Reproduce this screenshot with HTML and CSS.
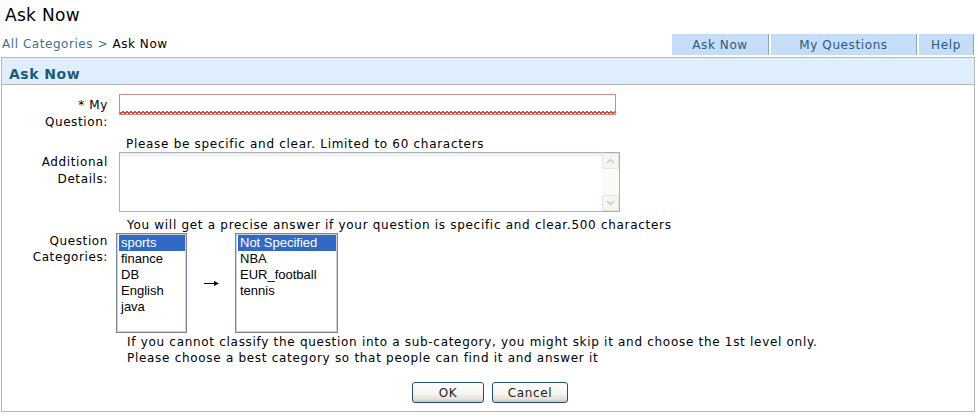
FILE: index.html
```html
<!DOCTYPE html>
<html>
<head>
<meta charset="utf-8">
<title>Ask Now</title>
<link rel="stylesheet" href="styles.css">
</head>
<body>
<h1 class="title">Ask Now</h1>
<div class="topbar">
  <div class="crumbs"><span class="crumb-link">All Categories</span> <span class="crumb-sep">&gt;</span> Ask Now</div>
  <nav class="tabs">
    <span class="tab tab-ask">Ask Now</span>
    <span class="tab tab-mine">My Questions</span>
    <span class="tab tab-help">Help</span>
  </nav>
</div>
<section class="panel">
  <div class="panel-head">Ask Now</div>
  <form class="form">
    <label class="label label-q">* My<br>Question:</label>
    <div class="field"><input class="input" type="text"></div>
    <div class="hint hint-1">Please be specific and clear. Limited to 60 characters</div>

    <label class="label label-d">Additional<br>Details:</label>
    <div class="field">
      <div class="tarea">
        <textarea class="tarea-text"></textarea>
        <div class="scroll">
          <span class="sbtn"><svg width="9" height="6" viewBox="0 0 9 6"><path d="M1 5 L4.5 1.5 L8 5" fill="none" stroke="#c3cad8" stroke-width="1.5"/></svg></span>
          <span class="sbtn"><svg width="9" height="6" viewBox="0 0 9 6"><path d="M1 1 L4.5 4.5 L8 1" fill="none" stroke="#c3cad8" stroke-width="1.5"/></svg></span>
        </div>
      </div>
    </div>
    <div class="hint hint-2">You will get a precise answer if your question is specific and clear.500 characters</div>

    <label class="label label-c">Question<br>Categories:</label>
    <div class="field cats">
      <div class="listbox list-main">
        <div class="opt opt-sel">sports</div>
        <div class="opt">finance</div>
        <div class="opt">DB</div>
        <div class="opt">English</div>
        <div class="opt">java</div>
      </div>
      <div class="arrow"><svg width="16" height="7" viewBox="0 0 16 7"><path d="M0 3.5 H12" stroke="#000" stroke-width="1"/><path d="M10 1 L15 3.5 L10 6 Z" fill="#000"/></svg></div>
      <div class="listbox list-sub">
        <div class="opt opt-sel">Not Specified</div>
        <div class="opt">NBA</div>
        <div class="opt">EUR_football</div>
        <div class="opt">tennis</div>
      </div>
    </div>
    <div class="hint hint-3">If you cannot classify the question into a sub-category, you might skip it and choose the 1st level only.<br>Please choose a best category so that people can find it and answer it</div>

    <div class="actions">
      <button type="button" class="btn btn-ok">OK</button>
      <button type="button" class="btn btn-cancel">Cancel</button>
    </div>
  </form>
</section>
</body>
</html>
```

FILE: styles.css
```css
body {
  margin: 0;
  font-family: "DejaVu Sans", Verdana, sans-serif;
  font-size: 12px;
  letter-spacing: 0.7px;
  color: #000;
  background: #fff;
}

.title {
  margin: 0 0 7px;
  padding: 3px 0 0 5px;
  font-size: 17px;
  font-weight: normal;
  line-height: 24px;
  letter-spacing: 0.3px;
}

.topbar {
  display: flex;
  justify-content: space-between;
  align-items: center;
  height: 21px;
  margin-right: 4px;
}

.crumbs {
  padding-left: 2px;
  line-height: 21px;
  letter-spacing: 0.55px;
}

.crumb-link,
.crumb-sep {
  color: #3f6f8f;
}

.tabs {
  display: flex;
  gap: 2px;
  height: 21px;
}

.tab {
  box-sizing: border-box;
  height: 21px;
  padding-top: 2px;
  line-height: 19px;
  text-align: center;
  letter-spacing: 0.6px;
  background: #c6ddf7;
  border-right: 1px solid #8ea4bb;
  color: #2a5a7e;
}

.tab-ask { width: 97px; }
.tab-mine { width: 146px; }
.tab-help { width: 55px; }

.panel {
  margin: 2px 3px 0 1px;
  border: 1px solid #b7b7b7;
}

.panel-head {
  padding: 7px 0 0 7px;
  line-height: 19px;
  background: #dfeefc;
  border-bottom: 1px solid #b7b7b7;
  font-size: 14px;
  font-weight: bold;
  letter-spacing: 0.5px;
  color: #1d5a7b;
}

.form {
  display: grid;
  grid-template-columns: 106px 1fr;
  column-gap: 11px;
  padding: 9px 0 8px;
}

.label {
  grid-column: 1;
  text-align: right;
  line-height: 17px;
  letter-spacing: 0.6px;
}

.label-q { padding-top: 3px; }
.label-d { padding-top: 2px; }
.label-c { line-height: 16px; }

.field { grid-column: 2; }

.input {
  display: block;
  box-sizing: border-box;
  width: 497px;
  height: 21px;
  margin: 0;
  border: 1px solid #c98b80;
  background-color: #fff;
  background-image:
    linear-gradient(135deg, transparent 30%, #d84a4a 30%, #d84a4a 62%, transparent 62%),
    linear-gradient(45deg, transparent 30%, #d84a4a 30%, #d84a4a 62%, transparent 62%);
  background-size: 4px 3px, 4px 3px;
  background-position: 0 100%, 2px 100%;
  background-repeat: repeat-x;
  background-origin: padding-box;
}

.hint {
  grid-column: 2;
  padding-left: 7px;
  line-height: 16px;
}

.hint-1 { margin-top: 5px; }
.hint-2 { margin-top: 5px; padding-left: 8px; }
.hint-3 { margin-top: 1px; padding-left: 8px; }

.tarea {
  display: flex;
  box-sizing: border-box;
  width: 501px;
  height: 60px;
  border: 1px solid #abb0b8;
  background: linear-gradient(#e9e9e9, #fff 5px);
}

.tarea-text {
  flex: 1;
  margin: 0;
  border: 0;
  padding: 2px;
  resize: none;
  background: transparent;
  outline: none;
}

.scroll {
  display: flex;
  flex-direction: column;
  justify-content: space-between;
  width: 17px;
  background: #fbfbf6;
}

.sbtn {
  display: flex;
  align-items: center;
  justify-content: center;
  box-sizing: border-box;
  height: 16px;
  border: 1px solid #e4e4dc;
  border-radius: 2px;
  background: #f6f6ef;
}

.cats {
  display: flex;
  align-items: center;
  margin-left: -3px;
}

.listbox {
  box-sizing: border-box;
  height: 100px;
  padding: 1px 1px 1px 2px;
  border: 1px solid #7c8894;
  box-shadow: inset 0 0 0 1px #cdd1d6;
  font-family: "Liberation Sans", Arial, sans-serif;
  font-size: 13px;
  letter-spacing: 0;
}

.list-main { width: 71px; }
.list-sub { width: 103px; }

.opt {
  padding-left: 2px;
  line-height: 16px;
  white-space: nowrap;
}

.opt-sel {
  background: #316ac5;
  color: #fff;
}

.arrow {
  display: flex;
  justify-content: center;
  width: 48px;
  padding-left: 2px;
  box-sizing: border-box;
}

.actions {
  grid-column: 1 / -1;
  display: flex;
  justify-content: center;
  gap: 8px;
  margin-top: 16px;
  padding-left: 4px;
}

.btn {
  box-sizing: border-box;
  height: 21px;
  padding: 0;
  border: 1px solid #24517a;
  border-radius: 3px;
  background: linear-gradient(#ffffff, #f4f4f0 55%, #e4e2da 85%, #c8c4b6);
  font-family: inherit;
  font-size: 12px;
  letter-spacing: 0.6px;
  color: #222;
}

.btn-ok { width: 72px; }
.btn-cancel { width: 76px; }
```
